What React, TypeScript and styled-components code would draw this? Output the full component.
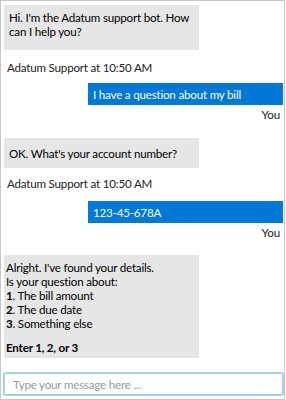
import React from "react";
import styled, { createGlobalStyle } from "styled-components";

const Global = createGlobalStyle`
  html, body { margin: 0; padding: 0; background: #fff; }
  * { box-sizing: border-box; }
`;

const Frame = styled.div`
  width: 285px;
  height: 400px;
  border: 1px solid #c6c6c6;
  display: flex;
  flex-direction: column;
  font-family: Lato, "Open Sans", sans-serif;
  font-size: 11.6px;
  letter-spacing: -0.2px;
  color: #000;
  overflow: hidden;
`;

const Messages = styled.div`
  flex: 1;
  display: flex;
  flex-direction: column;
  padding: 4px 1px 0 3px;
  overflow: hidden;
`;

const BotBubble = styled.div<{ $gap?: number; $pt?: number; $pb?: number; $pl?: number }>`
  width: 195px;
  background: #e6e6e6;
  padding: ${(p) => p.$pt ?? 6}px 3px ${(p) => p.$pb ?? 11}px ${(p) => p.$pl ?? 5}px;
  line-height: 14px;
  margin-top: ${(p) => p.$gap ?? 0}px;
`;

const Stamp = styled.div<{ $gap: number }>`
  margin-top: ${(p) => p.$gap}px;
  padding-left: 3px;
  color: #222;
  line-height: 14px;
`;

const UserBubble = styled.div<{ $gap: number }>`
  align-self: flex-end;
  width: 195px;
  margin-top: ${(p) => p.$gap}px;
  background: #0078d7;
  color: #fff;
  padding: 5px 5px 3px 5px;
  line-height: 14px;
`;

const Sender = styled.div`
  align-self: flex-end;
  margin-right: 3px;
  margin-top: 3px;
  line-height: 14px;
  color: #222;
`;

const Line = styled.div``;
const Spacer = styled.div`height: 10px;`;

const InputWrap = styled.div`
  padding: 0 0 3px 2px;
`;

const Input = styled.input`
  width: 100%;
  height: 24px;
  border: 2px solid #a6cff2;
  border-radius: 3px;
  padding: 0 8px;
  font-family: inherit;
  font-size: 11.6px;
  letter-spacing: -0.2px;
  outline: none;
  &::placeholder { color: #9a9a9a; }
`;

export default function App() {
  return (
    <>
      <Global />
      <Frame>
        <Messages>
          <BotBubble>
            Hi. I'm the Adatum support bot. How can I help you?
          </BotBubble>
          <Stamp $gap={11}>Adatum Support at 10:50 AM</Stamp>
          <UserBubble $gap={8}>I have a question about my bill</UserBubble>
          <Sender>You</Sender>
          <BotBubble $gap={16} $pt={9} $pb={7}>
            OK. What's your account number?
          </BotBubble>
          <Stamp $gap={9}>Adatum Support at 10:50 AM</Stamp>
          <UserBubble $gap={10}>123-45-678A</UserBubble>
          <Sender>You</Sender>
          <BotBubble $gap={15} $pb={3} $pl={2}>
            <Line>Alright. I've found your details.</Line>
            <Line>Is your question about:</Line>
            <Line><b>1</b>. The bill amount</Line>
            <Line><b>2</b>. The due date</Line>
            <Line><b>3</b>. Something else</Line>
            <Spacer />
            <Line><b>Enter 1, 2, or 3</b></Line>
          </BotBubble>
        </Messages>
        <InputWrap>
          <Input autoFocus placeholder="Type your message here ..." />
        </InputWrap>
      </Frame>
    </>
  );
}
